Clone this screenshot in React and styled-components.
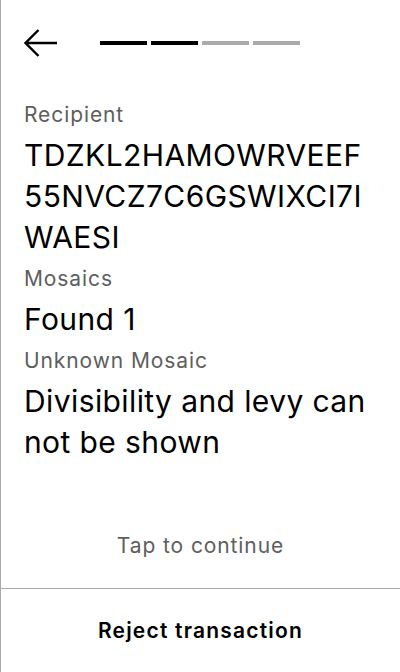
import React from "react";
import styled, { createGlobalStyle } from "styled-components";

const Global = createGlobalStyle`
  html, body { margin: 0; padding: 0; background: #fff; }
  body { font-family: Inter, "Noto Sans", sans-serif; }
`;

const Screen = styled.div`
  width: 400px;
  height: 672px;
  box-sizing: border-box;
  border-left: 1px solid #aaaaaa;
  display: flex;
  flex-direction: column;
  background: #fff;
  color: #000;
`;

const Header = styled.div`
  display: flex;
  align-items: center;
  padding: 29px 0 0 23px;
  height: 28px;
`;

const BackButton = styled.button`
  border: 0;
  background: none;
  padding: 0;
  width: 34px;
  height: 28px;
  display: flex;
  align-items: center;
  cursor: pointer;
`;

const Steps = styled.div`
  display: flex;
  gap: 4px;
  margin-left: 42px;
`;

const Step = styled.div`
  width: 47px;
  height: 4px;
  background: ${(p) => (p.$done ? "#000" : "#aaaaaa")};
`;

const Body = styled.div`
  padding: 0 26px 0 23px;
  margin-top: 37px;
  display: flex;
  flex-direction: column;
`;

const Label = styled.div`
  font-size: 21px;
  line-height: 41px;
  letter-spacing: 0.9px;
  color: #5e5e5e;
`;

const Value = styled.div`
  font-size: 30px;
  line-height: 41px;
  letter-spacing: 0.4px;
  color: #000;
  word-break: ${(p) => (p.$breakAll ? "break-all" : "normal")};
`;

const Spacer = styled.div`
  flex: 1;
`;

const Hint = styled.div`
  text-align: center;
  font-size: 21px;
  line-height: 28px;
  letter-spacing: 0.9px;
  color: #5e5e5e;
  padding-bottom: 28px;
`;

const Footer = styled.button`
  border: 0;
  border-top: 1px solid #aaaaaa;
  background: none;
  height: 84px;
  font-family: Inter, "Noto Sans", sans-serif;
  font-size: 21px;
  font-weight: 600;
  letter-spacing: 1.2px;
  color: #000;
  padding: 0;
  cursor: pointer;
`;

const Arrow = () => (
  <svg width="34" height="28" viewBox="0 0 34 28" fill="none">
    <path
      d="M1.5 14H33M14.5 1L1.5 14L14.5 27"
      stroke="#000"
      strokeWidth="2.4"
    />
  </svg>
);

export default function App() {
  return (
    <>
      <Global />
      <Screen>
        <Header>
          <BackButton aria-label="Back">
            <Arrow />
          </BackButton>
          <Steps>
            <Step $done />
            <Step $done />
            <Step />
            <Step />
          </Steps>
        </Header>
        <Body>
          <Label>Recipient</Label>
          <Value $breakAll>TDZKL2HAMOWRVEEF55NVCZ7C6GSWIXCI7IWAESI</Value>
          <Label>Mosaics</Label>
          <Value>Found 1</Value>
          <Label>Unknown Mosaic</Label>
          <Value>Divisibility and levy can not be shown</Value>
        </Body>
        <Spacer />
        <Hint>Tap to continue</Hint>
        <Footer>Reject transaction</Footer>
      </Screen>
    </>
  );
}
